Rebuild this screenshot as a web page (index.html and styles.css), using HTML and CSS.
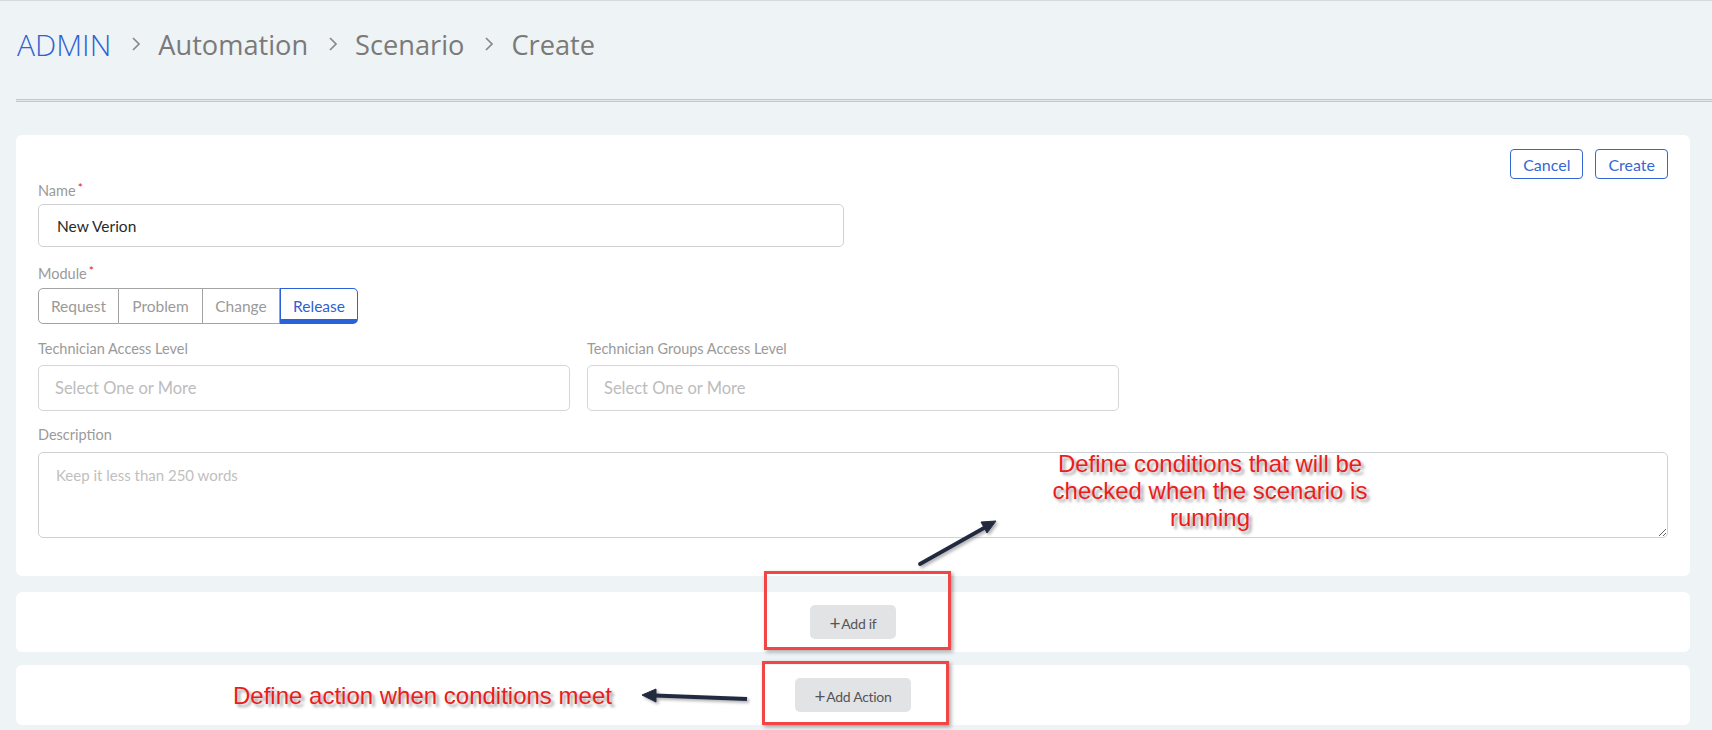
FILE: index.html
```html
<!DOCTYPE html>
<html lang="en">
<head>
	<meta charset="UTF-8">
	<title>Scenario - Create</title>
	<link rel="stylesheet" href="styles.css">
</head>
<body>
	<div class="page">
		<div class="crumbs">
			<span class="crumb root">ADMIN</span>
			<svg class="sep" viewBox="0 0 10 16"><path d="M2 2 L8 8 L2 14" /></svg>
			<span class="crumb">Automation</span>
			<svg class="sep" viewBox="0 0 10 16"><path d="M2 2 L8 8 L2 14" /></svg>
			<span class="crumb">Scenario</span>
			<svg class="sep" viewBox="0 0 10 16"><path d="M2 2 L8 8 L2 14" /></svg>
			<span class="crumb">Create</span>
		</div>
		<div class="rule"></div>

		<div class="card form-card">
			<div class="form-actions">
				<button class="btn-outline">Cancel</button>
				<button class="btn-outline">Create</button>
			</div>

			<label class="field-label">Name<span class="req">*</span></label>
			<input class="text-input name-input" type="text" value="New Verion">

			<label class="field-label gap">Module<span class="req">*</span></label>
			<div class="segments">
				<button class="seg">Request</button>
				<button class="seg">Problem</button>
				<button class="seg">Change</button>
				<button class="seg active">Release</button>
			</div>

			<div class="two-col">
				<div class="col">
					<label class="field-label gap">Technician Access Level</label>
					<div class="select-box">Select One or More</div>
				</div>
				<div class="col">
					<label class="field-label gap">Technician Groups Access Level</label>
					<div class="select-box">Select One or More</div>
				</div>
			</div>

			<label class="field-label gap">Description</label>
			<textarea class="desc" placeholder="Keep it less than 250 words"></textarea>
		</div>

		<div class="card add-card first">
			<button class="btn-add"><span class="plus">+</span>Add if</button>
		</div>
		<div class="card add-card">
			<button class="btn-add"><span class="plus">+</span>Add Action</button>
		</div>
	</div>

	<!-- annotations drawn on top of the screenshot -->
	<div class="mark mark-if"></div>
	<div class="mark mark-action"></div>
	<div class="note note-if">Define conditions that will be<br>checked when the scenario is<br>running</div>
	<div class="note note-action">Define action when conditions meet</div>
	<svg class="arrows" width="1712" height="730" viewBox="0 0 1712 730">
		<defs>
			<filter id="shade" x="-20%" y="-20%" width="140%" height="140%">
				<feDropShadow dx="2" dy="2" stdDeviation="1.5" flood-color="#000" flood-opacity="0.3"/>
			</filter>
		</defs>
		<g filter="url(#shade)" fill="#222b40" stroke="#222b40">
			<line x1="920" y1="563" x2="984" y2="527" stroke-width="3.8" stroke-linecap="round"/>
			<polygon points="996,520 987,532 981,521" stroke-width="1" stroke-linejoin="round"/>
			<line x1="747" y1="698" x2="655" y2="694.5" stroke-width="3.8"/>
			<polygon points="642,694 656,688 656,701" stroke-width="1" stroke-linejoin="round"/>
		</g>
	</svg>
</body>
</html>
```

FILE: styles.css
```css
*{
	box-sizing:border-box;
}
body{
	margin:0;
	position:relative;
	height:730px;
	overflow:hidden;
	background-color:#eef3f6;
	border-top:1px solid #d6d9dd;
	font-family:Lato,"Open Sans",sans-serif;
}
.page{
	padding:0 22px 0 16px;
}
.crumbs{
	display:flex;
	align-items:center;
	height:40px;
	margin-top:23px;
	padding-left:1px;
	font-family:"Open Sans",sans-serif;
	font-size:27.2px;
	color:#7a7a7a;
}
.crumb.root{
	color:#2f63d4;
	font-weight:300;
	font-size:30px;
}
.sep{
	width:12px;
	height:16px;
	margin:0 16px 0 19px;
	fill:none;
	stroke:#888;
	stroke-width:1.7;
}
.rule{
	height:3px;
	margin-top:35px;
	margin-right:-22px;
	border-top:1px solid #c4c7ca;
	border-bottom:1px solid #c4c7ca;
	background-color:#e6e9eb;
}
.card{
	background-color:#fff;
	border-radius:6px;
}
.form-card{
	margin-top:33px;
	padding:14px 22px 38px;
}
.form-actions{
	display:flex;
	justify-content:flex-end;
	gap:12px;
}
.btn-outline{
	height:30px;
	padding:0 12px;
	background:#fff;
	border:1px solid #3567d4;
	border-radius:4px;
	color:#3567d4;
	font-family:inherit;
	font-size:16px;
}
.field-label{
	display:block;
	height:18px;
	line-height:18px;
	font-size:14.5px;
	color:#9a9a9a;
}
.field-label.gap{
	margin-top:15px;
}
.req{
	color:#e02020;
	font-size:12px;
	margin-left:2px;
	vertical-align:4px;
}
.text-input{
	display:block;
	margin-top:7px;
	height:43px;
	padding:0 18px;
	border:1px solid #cfd2d4;
	border-radius:5px;
	font-family:inherit;
	font-size:15.5px;
	color:#2a2a2a;
	outline:none;
}
.name-input{
	width:806px;
}
.segments{
	display:flex;
	width:320px;
	height:36px;
	margin-top:8px;
}
.seg{
	height:36px;
	padding:0;
	background:#fff;
	border:1px solid #a3a3a3;
	border-left:none;
	font-family:inherit;
	font-size:15.5px;
	color:#9a9a9a;
}
.seg:nth-child(1){
	width:81px;
	border-left:1px solid #a3a3a3;
	border-radius:5px 0 0 5px;
}
.seg:nth-child(2){
	width:84px;
}
.seg:nth-child(3){
	width:77px;
}
.seg.active{
	width:78px;
	color:#2f5fd0;
	border:1px solid #2a63d8;
	border-bottom:5px solid #2a63d8;
	border-radius:0 5px 5px 0;
	padding-top:4px;
}
.two-col{
	display:flex;
	gap:17px;
}
.col{
	width:532px;
}
.two-col .field-label{
	margin-top:16px;
}
.select-box{
	margin-top:7px;
	height:46px;
	line-height:44px;
	padding:0 16px;
	border:1px solid #d4d6d8;
	border-radius:5px;
	font-size:16.5px;
	color:#bcbcbc;
}
.desc{
	display:block;
	width:100%;
	height:86px;
	margin-top:8px;
	padding:13px 17px;
	border:1px solid #cfd2d4;
	border-radius:5px;
	font-family:inherit;
	font-size:15px;
	resize:both;
	outline:none;
}
.desc::placeholder{
	color:#c0c0c0;
}
.add-card{
	display:flex;
	justify-content:center;
	align-items:center;
	height:60px;
	margin-top:13px;
}
.add-card.first{
	margin-top:16px;
}
.btn-add{
	height:34px;
	padding:0 20px;
	background-color:#e2e3e5;
	border:none;
	border-radius:5px;
	font-family:Lato,sans-serif;
	font-size:14px;
	color:#555;
	letter-spacing:-0.3px;
}
.btn-add .plus{
	font-size:19px;
	margin-right:1px;
	vertical-align:-1px;
}
.mark{
	position:absolute;
	border:3px solid #f24545;
	box-shadow:2px 2px 4px rgba(0,0,0,0.35);
}
.mark-if{
	left:764px;
	top:570px;
	width:187px;
	height:79px;
}
.mark-action{
	left:762px;
	top:660px;
	width:187px;
	height:64px;
}
.note{
	position:absolute;
	font-family:"Liberation Sans",Arial,sans-serif;
	line-height:27px;
	color:#ec1c1c;
	text-align:center;
	text-shadow:3px 3px 3px rgba(0,0,0,0.35);
	white-space:nowrap;
}
.note-if{
	left:1020px;
	top:449px;
	width:380px;
	font-size:24px;
}
.note-action{
	left:233px;
	top:681px;
	font-size:24px;
}
.arrows{
	position:absolute;
	left:0;
	top:0;
	pointer-events:none;
}
```
